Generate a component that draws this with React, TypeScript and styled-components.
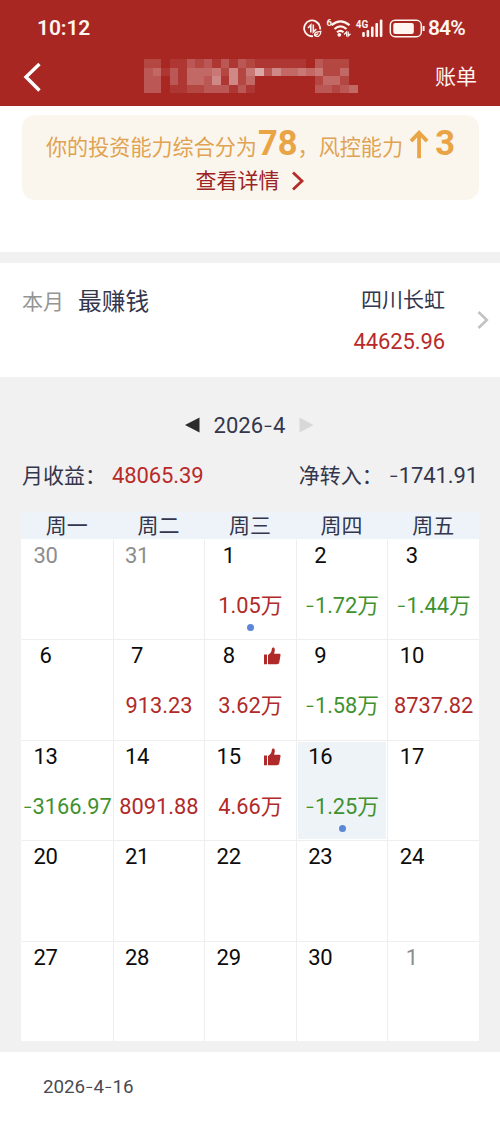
import React from 'react';
import styled, { createGlobalStyle } from 'styled-components';

const RED = '#a82723';
const VALUE_RED = '#b02a2a';
const GREEN = '#41912f';
const NAVY = '#33364d';

const GlobalStyle = createGlobalStyle`
  * { box-sizing: border-box; }
  body {
    margin: 0;
    background: #fff;
    font-family: Roboto, "Noto Sans CJK SC", sans-serif;
    color: ${NAVY};
  }
`;

const Page = styled.div`
  width: 500px;
  height: 1121px;
  overflow: hidden;
  display: flex;
  flex-direction: column;
  background: #fff;
`;

const Header = styled.header`
  height: 106px;
  flex: none;
  background: ${RED};
  color: #fff5f0;
`;

const StatusBar = styled.div`
  height: 54px;
  padding: 2px 33px 0 37px;
  display: flex;
  align-items: center;
  justify-content: space-between;
  font-size: 21px;
  font-weight: 600;
  line-height: 26px;
`;

const Clock = styled.span`
  letter-spacing: -0.1px;
`;

const StatusIcons = styled.div`
  display: flex;
  align-items: center;
`;

const Percent = styled.span`
  width: 39px;
  font-size: 21px;
  letter-spacing: -0.9px;
  white-space: nowrap;
`;

const NavBar = styled.div`
  height: 45px;
  padding: 0 23px 0 22px;
  display: flex;
  align-items: center;
`;

const TitleSlot = styled.div`
  flex: 1;
  display: flex;
  padding-left: 102px;
`;

const NavLink = styled.span`
  padding-top: 1px;
  font-size: 21px;
  line-height: 30px;
`;

const Promo = styled.section`
  height: 146px;
  flex: none;
  padding: 9px 21px 0 22px;
`;

const PromoCard = styled.div`
  height: 85px;
  padding: 10px 24px 0;
  border-radius: 13px;
  background: #fbf6ed;
  display: flex;
  flex-direction: column;
`;

const ScoreLine = styled.div`
  height: 40px;
  display: flex;
  align-items: baseline;
  font-size: 21.1px;
  line-height: 40px;
  color: #dfa353;
  white-space: nowrap;
`;

const Score = styled.b`
  margin-left: 1px;
  font-size: 34.5px;
  font-weight: 700;
  line-height: 36px;
  color: #e9a445;
`;

const UpArrow = styled.svg`
  align-self: center;
  margin-top: -3px;
`;

const DetailLink = styled.div`
  display: flex;
  align-items: center;
  justify-content: center;
  gap: 11px;
  height: 30px;
  padding: 1px 1px 0 0;
  font-size: 21px;
  line-height: 30px;
  color: #9c2424;
`;

const Divider = styled.div`
  height: 11px;
  flex: none;
  background: #f1f1f1;
`;

const BestStock = styled.section`
  height: 114px;
  flex: none;
  padding: 21px 11px 0 22px;
  display: flex;
`;

const Period = styled.span`
  width: 56px;
  font-size: 21px;
  line-height: 36px;
  color: #949494;
`;

const BestLabel = styled.span`
  flex: 1;
  font-size: 23.7px;
  line-height: 36px;
`;

const StockInfo = styled.div`
  display: flex;
  flex-direction: column;
  align-items: flex-end;
  font-size: 21px;
  line-height: 32px;
`;

const StockProfit = styled.span`
  margin-top: 10px;
  font-size: 22px;
  letter-spacing: -0.1px;
  color: #b92a2a;
`;

const RowChevron = styled.svg`
  margin: 26px 0 0 32px;
`;

const CalendarSection = styled.section`
  height: 675px;
  flex: none;
  padding: 30px 21px 0;
  background: #f1f1f1;
`;

const MonthPicker = styled.div`
  height: 36px;
  display: flex;
  align-items: center;
  justify-content: center;
  gap: 14px;
  padding-right: 1px;
  font-size: 22px;
`;

const Summary = styled.div`
  height: 30px;
  margin-top: 18px;
  padding: 0 1px;
  display: flex;
  justify-content: space-between;
  font-size: 21px;
  line-height: 30px;
`;

const SummaryItem = styled.div`
  display: flex;
  gap: 6px;
`;

const Amount = styled.span<{ $color?: string }>`
  font-size: 22px;
  letter-spacing: -0.1px;
  color: ${(p) => p.$color ?? 'inherit'};
`;

const WeekHeader = styled.div`
  height: 27px;
  margin-top: 21px;
  padding-top: 1px;
  display: grid;
  grid-template-columns: repeat(5, 1fr);
  background: #edf3f8;
  font-size: 21px;
  line-height: 27px;
  text-align: center;
`;

const Grid = styled.div`
  height: 502px;
  display: grid;
  grid-template-columns: repeat(5, 1fr);
  grid-template-rows: repeat(5, 1fr);
  background: #fff;
`;

const Cell = styled.div<{ $firstCol: boolean; $firstRow: boolean; $selected?: boolean }>`
  min-width: 0;
  padding: 1px;
  border-left: 1px solid ${(p) => (p.$firstCol ? '#fff' : '#eee')};
  border-top: 1px solid ${(p) => (p.$firstRow ? '#fff' : '#eee')};
  background: ${(p) => (p.$selected ? '#edf3f7' : '#fff')};
  background-clip: content-box;
  display: flex;
  flex-direction: column;
  align-items: center;
`;

const DayLine = styled.div`
  width: 100%;
  height: 30px;
  display: flex;
  align-items: center;
`;

const DayNumber = styled.span<{ $muted?: boolean }>`
  width: 45px;
  text-align: center;
  font-size: 22px;
  line-height: 30px;
  letter-spacing: -0.3px;
  color: ${(p) => (p.$muted ? '#8d8d8d' : '#0c0c0c')};
`;

const DayValue = styled.span<{ $loss: boolean }>`
  margin-top: 20px;
  font-size: 21.8px;
  line-height: 30px;
  white-space: nowrap;
  color: ${(p) => (p.$loss ? GREEN : VALUE_RED)};
`;

const Dot = styled.i`
  width: 7px;
  height: 7px;
  margin-top: 3px;
  border-radius: 50%;
  background: #5b87d6;
`;

const Thumb = styled.svg`
  margin-left: 12px;
`;

const Dash = styled.span`
  font-family: Inter, sans-serif;
  font-weight: 300;
  line-height: 0;
`;

const Footer = styled.footer`
  padding: 20px 43px;
  font-size: 18.800px;
  line-height: 30px;
  letter-spacing: -0.05px;
  color: #4a4a52;
`;

/** Numeric text whose hyphens use a wider dash shape. */
function Num({ text }: { text: string }) {
  return (
    <span>
      {text.split(/(-)/).map((part, i) => (part === '-' ? <Dash key={i}>-</Dash> : part))}
    </span>
  );
}

const MOSAIC = [
  '2201132313132111111032220',
  '3413144452625836445452240',
  '3303144361624000000024420',
  '3301122333131000000033234',
];

function MaskedTitle() {
  const size = 8.54;
  return (
    <svg width="214" height="35" viewBox="0 0 214 35" shapeRendering="crispEdges">
      {MOSAIC.flatMap((row, y) =>
        [...row].map((level, x) =>
          level === '0' ? null : (
            <rect
              key={`${x}-${y}`}
              x={x * size}
              y={y * size}
              width={size}
              height={size}
              fill="#fff"
              opacity={Number(level) * 0.075}
            />
          ),
        ),
      )}
    </svg>
  );
}

function SystemIcons() {
  return (
    <svg width="125" height="24" viewBox="303 15 125 24" fill="none" stroke="#fff5f0">
      <path d="M319.500 24.800A7.900 7.900 0 1 0 313 35.200M320.200 28.500A7.900 7.900 0 0 0 319.500 24.800" strokeWidth="1.800" />
      <path d="M308 27L310.800 24V31.500M313.300 23.500V31L316.300 28" strokeWidth="1.600" />
      <path d="M314.800 34.800C313.800 31.500 317 30.600 320.800 30.300C321 34.300 318 36.500 314.800 34.800L318.300 32.500" strokeWidth="1.300" />
      <g strokeWidth="2.300">
        <path d="M331.500 24.200Q340.500 16.500 349.500 24.200" />
        <path d="M334.500 28Q340.500 22.800 346.500 28" />
        <path d="M337 31.300Q340.500 28.400 343.500 31.300" strokeWidth="2" />
      </g>
      <circle cx="339.300" cy="33.800" r="1.900" fill="#fff5f0" stroke="none" />
      <path d="M344 33.500L346.600 31V35.500M348.200 30.500V35L350.500 32.800" strokeWidth="1.200" />
      <g fill="#fff5f0" stroke="none" fontFamily="Roboto, sans-serif" fontWeight="700">
        <text x="326.500" y="25" fontSize="9.500">6</text>
        <text x="355.800" y="27.200" fontSize="11" textLength="12.500" lengthAdjust="spacingAndGlyphs">4G</text>
        <rect x="362.200" y="31" width="2.600" height="5" rx="1" />
        <rect x="366.600" y="29" width="2.600" height="7" rx="1" />
        <rect x="371" y="25.500" width="2.600" height="10.500" rx="1" />
        <rect x="375.400" y="22" width="2.600" height="14" rx="1" />
        <rect x="379.800" y="18.500" width="2.600" height="17.500" rx="1" />
      </g>
      <rect x="390.300" y="19.300" width="31" height="16.400" rx="4.800" strokeWidth="1.500" />
      <rect x="393.300" y="22" width="20.500" height="11" rx="2" fill="#fff5f0" stroke="none" />
      <path d="M423.600 25V30" strokeWidth="2" />
    </svg>
  );
}

function ThumbIcon() {
  return (
    <Thumb width="18" height="18" viewBox="0 0 18 18" fill={VALUE_RED}>
      <path d="M1 7.500h3v9.700H1zM5 8C7.500 6.600 8.700 4.800 8.800 2.300C8.900 -.1 11.600 -.1 11.800 2.300C11.900 4.100 11.500 5.400 11 6.800H16.500Q17.700 6.900 17.500 8.200L16.300 15.200Q16 17.200 14 17.200H5Z" />
    </Thumb>
  );
}

type Day = { day: string; value?: string; muted?: boolean; dot?: boolean; thumb?: boolean; selected?: boolean };

const WEEKDAYS = ['周一', '周二', '周三', '周四', '周五'];

const DAYS: Day[] = [
  { day: '30', muted: true },
  { day: '31', muted: true },
  { day: '1', value: '1.05万', dot: true },
  { day: '2', value: '-1.72万' },
  { day: '3', value: '-1.44万' },
  { day: '6' },
  { day: '7', value: '913.23' },
  { day: '8', value: '3.62万', thumb: true },
  { day: '9', value: '-1.58万' },
  { day: '10', value: '8737.82' },
  { day: '13', value: '-3166.97' },
  { day: '14', value: '8091.88' },
  { day: '15', value: '4.66万', thumb: true },
  { day: '16', value: '-1.25万', dot: true, selected: true },
  { day: '17' },
  { day: '20' },
  { day: '21' },
  { day: '22' },
  { day: '23' },
  { day: '24' },
  { day: '27' },
  { day: '28' },
  { day: '29' },
  { day: '30' },
  { day: '1', muted: true },
];

export default function App() {
  return (
    <Page>
      <GlobalStyle />
      <Header>
        <StatusBar>
          <Clock>10:12</Clock>
          <StatusIcons>
            <SystemIcons />
            <Percent>84%</Percent>
          </StatusIcons>
        </StatusBar>
        <NavBar>
          <svg width="20" height="32" viewBox="0 0 20 32" fill="none" stroke="#fff" strokeWidth="3.400">
            <path d="M17.500 3L4 16L17.500 29.500" />
          </svg>
          <TitleSlot>
            <MaskedTitle />
          </TitleSlot>
          <NavLink>账单</NavLink>
        </NavBar>
      </Header>

      <Promo>
        <PromoCard>
          <ScoreLine>
            你的投资能力综合分为<Score>78</Score>，风控能力
            <UpArrow width="33" height="32" viewBox="0 0 33 32" fill="none" stroke="#e9a445" strokeWidth="4">
              <path d="M17 31V4M8.500 13L17 4L25.500 13" />
            </UpArrow>
            <Score>3</Score>
          </ScoreLine>
          <DetailLink>
            查看详情
            <svg width="14" height="20" viewBox="0 0 14 20" fill="none" stroke="#b52b28" strokeWidth="2.800">
              <path d="M2 1.500L11 10L2 18.500" />
            </svg>
          </DetailLink>
        </PromoCard>
      </Promo>

      <Divider />

      <BestStock>
        <Period>本月</Period>
        <BestLabel>最赚钱</BestLabel>
        <StockInfo>
          <span>四川长虹</span>
          <StockProfit>44625.96</StockProfit>
        </StockInfo>
        <RowChevron width="12" height="20" viewBox="0 0 12 20" fill="none" stroke="#c2c2c2" strokeWidth="2.600">
          <path d="M1.500 2L9.800 10L1.500 18" />
        </RowChevron>
      </BestStock>

      <CalendarSection>
        <MonthPicker>
          <svg width="15" height="16" viewBox="0 0 15 16">
            <path d="M0 8L14.500 .5V15.500Z" fill="#2b2b2b" />
          </svg>
          <Num text="2026-4" />
          <svg width="15" height="16" viewBox="0 0 15 16">
            <path d="M14.500 8L.5 .5V15.500Z" fill="#d8d8d8" />
          </svg>
        </MonthPicker>
        <Summary>
          <SummaryItem>
            <span>月收益：</span>
            <Amount $color="#b92a2a">48065.39</Amount>
          </SummaryItem>
          <SummaryItem>
            <span>净转入：</span>
            <Amount>
              <Num text="-1741.91" />
            </Amount>
          </SummaryItem>
        </Summary>
        <WeekHeader>
          {WEEKDAYS.map((name) => (
            <span key={name}>{name}</span>
          ))}
        </WeekHeader>
        <Grid>
          {DAYS.map((d, i) => (
            <Cell key={i} $firstCol={i % 5 === 0} $firstRow={i < 5} $selected={d.selected}>
              <DayLine>
                <DayNumber $muted={d.muted}>{d.day}</DayNumber>
                {d.thumb && <ThumbIcon />}
              </DayLine>
              {d.value && (
                <DayValue $loss={d.value.startsWith('-')}>
                  <Num text={d.value} />
                </DayValue>
              )}
              {d.dot && <Dot />}
            </Cell>
          ))}
        </Grid>
      </CalendarSection>

      <Footer>
        <Num text="2026-4-16" />
      </Footer>
    </Page>
  );
}
